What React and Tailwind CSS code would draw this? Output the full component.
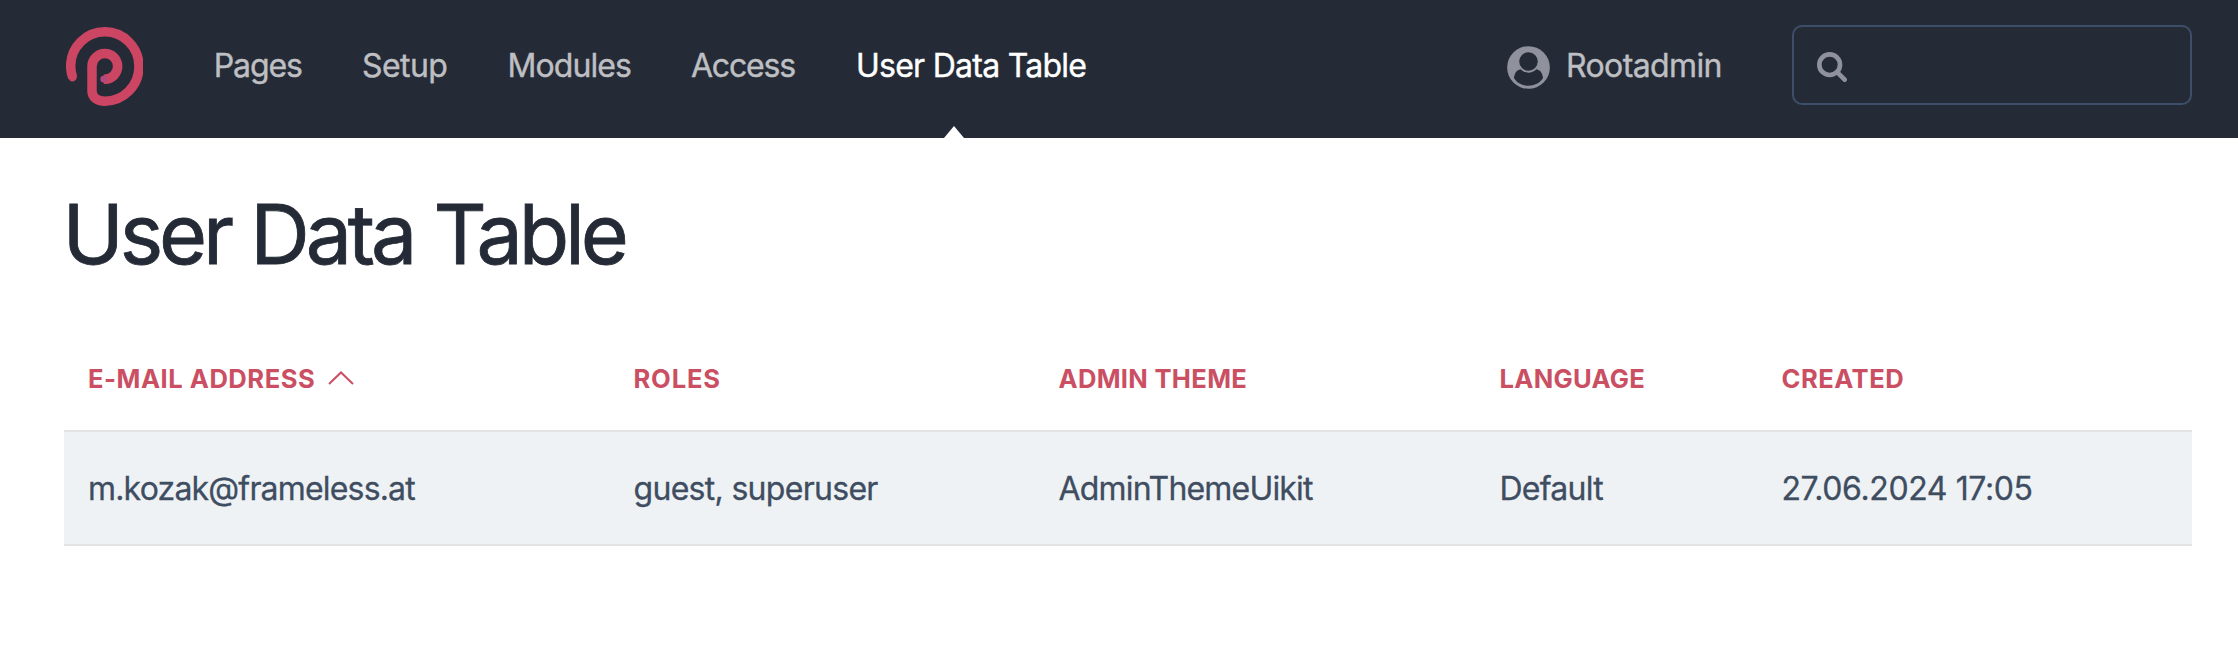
const navItems = [
  { label: 'Pages', cls: 'w-[148.3px] tracking-[-1.1px]' },
  { label: 'Setup', cls: 'w-[145.5px] tracking-[-0.55px]' },
  { label: 'Modules', cls: 'w-[183.5px] tracking-[-0.9px]' },
  { label: 'Access', cls: 'w-[165px] tracking-[-1.2px]' },
];

const columns = [
  { title: 'E-mail address', value: 'm.kozak@frameless.at', head: 'tracking-[0.51px]', cell: 'tracking-[-0.82px]', sorted: true },
  { title: 'Roles', value: 'guest, superuser', head: 'tracking-[0.8px]', cell: 'tracking-[-0.7px]' },
  { title: 'Admin theme', value: 'AdminThemeUikit', head: 'tracking-[0.3px]', cell: 'tracking-[-0.82px]' },
  { title: 'Language', value: 'Default', head: 'tracking-[0.3px]', cell: 'tracking-[-0.75px]' },
  { title: 'Created', value: '27.06.2024 17:05', head: 'tracking-[0.5px]', cell: 'tracking-[-0.4px]' },
];

function Logo() {
  return (
    <svg viewBox="77 51 233 237" className="h-[79px] w-[77.67px]" fill="none">
      <path
        d="M97 202 Q91 186 91 168 A102.500 102.500 0 0 1 193.500 65.500 A102.500 104 0 0 1 193.500 273.500 C170 273 155 262 155 243 V169 A38.500 38.500 0 1 1 194 207.500 H190"
        stroke="#cc4563"
        strokeWidth="28.500"
      />
      <path d="M83 200 L110 196 Q110 214 96 214.500 Q87 214 83 200 Z" fill="#cc4563" />
      <circle cx="190" cy="207.500" r="10" fill="#b14a80" />
    </svg>
  );
}

function UserIcon() {
  return (
    <svg viewBox="0 0 130 130" className="h-[43px] w-[43px]">
      <circle cx="65" cy="65" r="64.500" fill="#8f929d" />
      <circle cx="65" cy="47" r="28" fill="#252b36" />
      <path d="M21 97 C23 81 29 73 41 70 C55 84 75 84 89 70 C101 73 107 81 109 97 C91 128 39 128 21 97 Z" fill="#252b36" />
    </svg>
  );
}

function SearchIcon() {
  return (
    <svg viewBox="0 0 90 90" className="h-[30px] w-[30px]" fill="none" stroke="#8f929d">
      <circle cx="38" cy="38" r="31" strokeWidth="14" />
      <path d="M61 61 L83 83" strokeWidth="14" strokeLinecap="round" />
    </svg>
  );
}

export default function App() {
  return (
    <div className="min-h-[648px] bg-white font-['Inter',sans-serif] text-[32px] leading-[48px]">
      <header className="flex h-[138px] bg-[#252b36] pl-[65.700px] text-[#bebfc2] [-webkit-text-stroke:0.4px]">
        <div className="w-[148px] pt-[27px]">
          <Logo />
        </div>
        <nav className="flex flex-1 pt-[42px]">
          {navItems.map((item) => (
            <a key={item.label} className={item.cls}>
              {item.label}
            </a>
          ))}
          <a className="relative h-24 tracking-[-0.74px] whitespace-nowrap text-white">
            User Data Table
            <svg viewBox="0 0 20 12" className="absolute bottom-0 left-[88px] h-3 w-5">
              <path d="M0 12 L10 0 L20 12 Z" fill="#fff" />
            </svg>
          </a>
        </nav>
        <div className="flex w-[285px] pt-[42px]">
          <div className="w-[59px] pt-[4px]">
            <UserIcon />
          </div>
          <span className="tracking-[-0.61px]">Rootadmin</span>
        </div>
        <div className="mt-[25px] mr-[46px] h-20 w-[400px] rounded-[10px] border-2 border-[#3d4f68] pt-[25px] pl-[23px]">
          <SearchIcon />
        </div>
      </header>
      <main className="pr-[46px] pl-16">
        <h1 className="-ml-[1.500px] pt-[46px] text-[82.500px] leading-[100px] tracking-[-4.200px] [word-spacing:1.500px] text-[#252b36] [-webkit-text-stroke:0.8px]">
          User Data Table
        </h1>
        <div className="mt-[52px] grid grid-cols-[545.500px_425px_441px_282px_1fr] pl-[24px]">
          {columns.map((c) => (
            <div key={c.title} className={`flex h-[94px] pt-[19px] text-[25.600px] font-bold uppercase text-[#cb4f63] ${c.head}`}>
              {c.title}
              {c.sorted && (
                <svg viewBox="0 0 26 14" className="ml-[13px] mt-[16px] h-[14px] w-[26px]" fill="none">
                  <path d="M1 13 L13 1.500 L25 13" stroke="#cb4f63" strokeWidth="2" />
                </svg>
              )}
            </div>
          ))}
        </div>
        <div className="grid h-[116px] grid-cols-[545.500px_425px_441px_282px_1fr] items-center border-y-2 border-[#e3e4e5] bg-[#eef2f5] pt-[2px] pl-[24px] text-[#3f4d61] [-webkit-text-stroke:0.3px]">
          {columns.map((c) => (
            <div key={c.title} className={c.cell}>
              {c.value}
            </div>
          ))}
        </div>
      </main>
    </div>
  );
}
